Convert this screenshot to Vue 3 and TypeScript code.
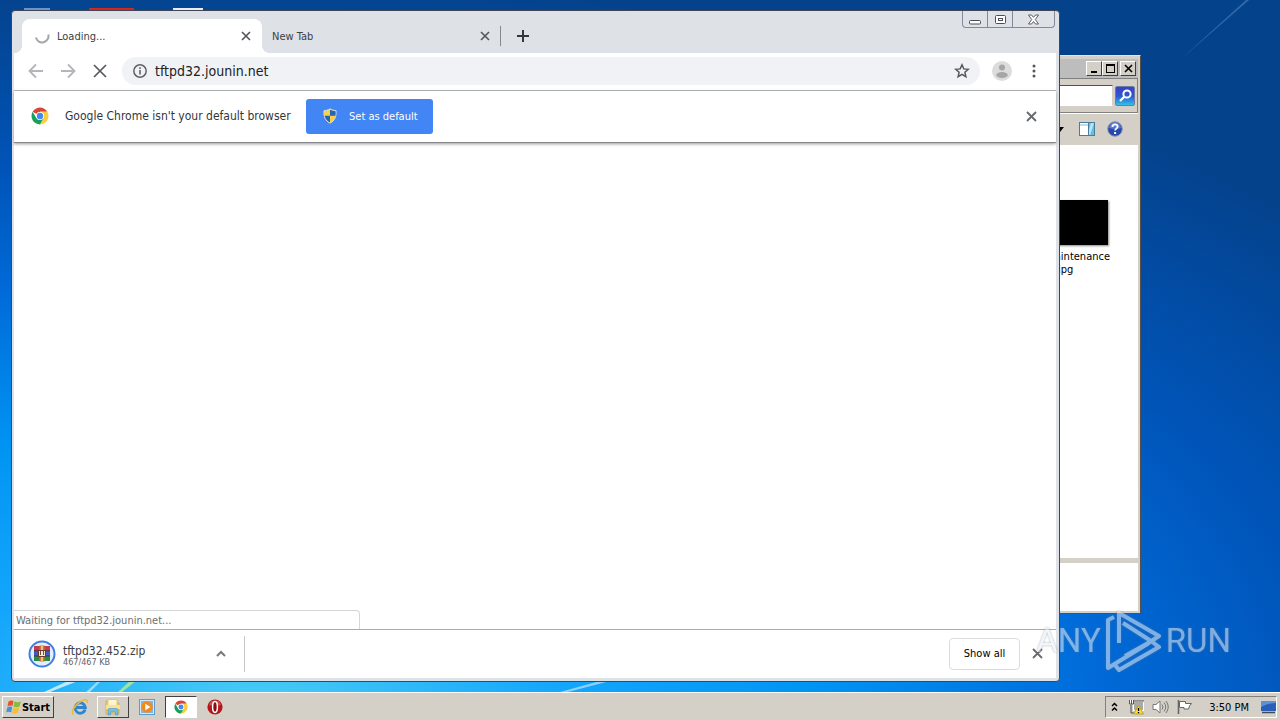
<script setup lang="ts">
import { ref } from 'vue'

interface Tab {
  title: string
  active: boolean
  loading: boolean
}

const tabs: Tab[] = [
  { title: 'Loading...', active: true, loading: true },
  { title: 'New Tab', active: false, loading: false },
]
const address = ref('tftpd32.jounin.net')
const search = ref('')
</script>

<template>
  <div class="desktop">
    <main class="stage">
      <svg class="rays" viewBox="0 0 1280 692" preserveAspectRatio="none" aria-hidden="true">
        <path d="M44 692 L68 681 L78 681 L50 692Z" fill="#fff" opacity=".7" />
        <path d="M86 692 L98 681 L101 681 L90 692Z" fill="#fff" opacity=".5" />
        <path d="M118 692 L130 681 L136 681 L122 692Z" fill="#b9f08c" opacity=".8" />
        <path d="M560 692 L600 681 L610 681 L568 692Z" fill="#fff" opacity=".5" />
        <path d="M1180 60 L1246 0 L1249 0Z" fill="#9fc6e8" opacity=".3" />
      </svg>
      <div class="shortcuts" aria-hidden="true">
        <span class="sliver pale"></span>
        <span class="sliver red"></span>
        <span class="sliver white"></span>
      </div>

      <section class="explorer">
        <header class="ex-title">
          <button class="classic" aria-label="Minimize">
            <svg width="11" height="10" viewBox="0 0 11 10"><path d="M2 7h6v2H2z" /></svg>
          </button>
          <button class="classic" aria-label="Maximize">
            <svg width="11" height="10" viewBox="0 0 11 10"><path d="M1 0h9v9H1zM2 2v6h7V2z" fill-rule="evenodd" /></svg>
          </button>
          <button class="classic gap" aria-label="Close">
            <svg width="11" height="10" viewBox="0 0 11 10"><path d="M2 1l7 7M9 1L2 8" stroke="#000" stroke-width="1.6" /></svg>
          </button>
        </header>
        <div class="ex-address">
          <input v-model="search" type="text" aria-label="Search folder" />
          <button class="go" aria-label="Search">
            <svg width="18" height="18" viewBox="0 0 18 18"><circle cx="11" cy="7" r="3.6" fill="none" stroke="#fff" stroke-width="2" /><path d="M8.4 9.6L4 14" stroke="#fff" stroke-width="2.2" /></svg>
          </button>
        </div>
        <div class="ex-tools">
          <svg class="caret" width="8" height="5" viewBox="0 0 8 5"><path d="M0 0h8L4 5z" /></svg>
          <button class="plain" aria-label="Preview pane">
            <svg width="16" height="14" viewBox="0 0 16 14"><rect x=".5" y=".5" width="15" height="13" fill="#fff" stroke="#4c7a9c" /><path d="M1 3h9" stroke="#87b4d0" /><rect x="10" y="1" width="5" height="12" fill="#65bfe0" /><path d="M12 1h3L11 13h-1V8z" fill="#b7e6f5" /><path d="M9.5 1v12" stroke="#4c7a9c" /></svg>
          </button>
          <button class="plain" aria-label="Help">
            <svg width="16" height="16" viewBox="0 0 16 16"><circle cx="8" cy="8" r="7.3" fill="#2847ad" stroke="#8e97b0" /><path d="M2 7a6 6 0 0 1 12 0Q8 9 2 7" fill="#6f91de" opacity=".7" /><path d="M5.4 6c0-3.5 5.4-3.4 5.2-.3C10.5 7.500 8.100 7.700 8.100 9.600" fill="none" stroke="#fff" stroke-width="1.8" /><rect x="7.100" y="11" width="2" height="2" fill="#fff" /></svg>
          </button>
        </div>
        <div class="ex-body">
          <figure class="file">
            <div class="thumb"></div>
            <figcaption>
              <span class="name">maintenance</span>
              <span class="ext">.jpg</span>
            </figcaption>
          </figure>
        </div>
        <div class="ex-details"></div>
      </section>

      <section class="browser">
        <header class="tabstrip">
          <div v-for="tab in tabs" :key="tab.title" class="tab" :class="{ active: tab.active }">
            <svg v-if="tab.loading" class="spinner" width="16" height="16" viewBox="0 0 16 16"><path d="M14.300 6.500A6.300 6.300 0 0 1 1.900 9.600" fill="none" stroke="#a3a6aa" stroke-width="2" /></svg>
            <span class="tab-title">{{ tab.title }}</span>
            <button class="plain tab-close" aria-label="Close tab">
              <svg width="10" height="10" viewBox="0 0 10 10"><path d="M1 1l8 8M9 1L1 9" stroke="#55585d" stroke-width="1.7" /></svg>
            </button>
          </div>
          <button class="plain new-tab" aria-label="New tab">
            <svg width="12" height="12" viewBox="0 0 12 12"><path d="M6 0v12M0 6h12" stroke="#33363b" stroke-width="2" /></svg>
          </button>
          <div class="win-controls">
            <button aria-label="Minimize">
              <svg width="13" height="13" viewBox="0 0 13 13"><rect x=".5" y="7.500" width="11" height="3.500" rx="1" fill="#fff" stroke="#4b4d5b" /></svg>
            </button>
            <button aria-label="Restore">
              <svg width="13" height="13" viewBox="0 0 13 13"><rect x="1.500" y="2.500" width="10" height="8" rx="1" fill="#fff" stroke="#4b4d5b" /><rect x="4.500" y="5.500" width="4" height="2" fill="#fff" stroke="#4b4d5b" /></svg>
            </button>
            <button class="wide" aria-label="Close">
              <svg width="13" height="13" viewBox="0 0 13 13"><path d="M1.500 2h3l2 2.300 2-2.300h3L8.300 6.500l3.200 4.500h-3l-2-2.500-2 2.500h-3l3.200-4.500z" fill="#fff" stroke="#5b5d6b" /></svg>
            </button>
          </div>
        </header>

        <nav class="toolbar">
          <button class="plain tool" aria-label="Back">
            <svg width="16" height="16" viewBox="0 0 16 16"><path d="M15 8H2M8 1.500L1.500 8 8 14.500" fill="none" stroke="#b4b6b9" stroke-width="1.900" /></svg>
          </button>
          <button class="plain tool" aria-label="Forward">
            <svg width="16" height="16" viewBox="0 0 16 16"><path d="M1 8h13M8 1.500L14.500 8 8 14.500" fill="none" stroke="#b4b6b9" stroke-width="1.900" /></svg>
          </button>
          <button class="plain tool" aria-label="Stop">
            <svg width="14" height="14" viewBox="0 0 14 14"><path d="M1 1l12 12M13 1L1 13" stroke="#55585d" stroke-width="1.700" /></svg>
          </button>
          <div class="omnibox">
            <svg width="14" height="14" viewBox="0 0 14 14"><circle cx="7" cy="7" r="6.200" fill="none" stroke="#5f6368" stroke-width="1.500" /><path d="M7 6v4.500M7 3.300v1.600" stroke="#5f6368" stroke-width="1.600" /></svg>
            <input v-model="address" type="text" aria-label="Address" />
            <button class="plain" aria-label="Bookmark this page">
              <svg width="16" height="16" viewBox="0 0 16 16"><path d="M8 1.800l1.800 4.100 4.500.4-3.400 3 1 4.400L8 11.400l-3.900 2.300 1-4.400-3.400-3 4.500-.4z" fill="none" stroke="#55585d" stroke-width="1.500" /></svg>
            </button>
          </div>
          <button class="plain tool avatar" aria-label="Profile">
            <svg width="20" height="20" viewBox="0 0 20 20"><circle cx="10" cy="10" r="10" fill="#dcdcdd" /><circle cx="10" cy="6.500" r="3" fill="#a6a6a8" /><ellipse cx="10" cy="14" rx="5.800" ry="3" fill="#a6a6a8" /></svg>
          </button>
          <button class="plain tool" aria-label="Menu">
            <svg width="4" height="14" viewBox="0 0 4 14"><circle cx="2" cy="2" r="1.500" fill="#55585d" /><circle cx="2" cy="7" r="1.500" fill="#55585d" /><circle cx="2" cy="12" r="1.500" fill="#55585d" /></svg>
          </button>
        </nav>

        <div class="infobar">
          <svg width="18" height="18" viewBox="0 0 18 18"><path d="M9 9L1.640 4.750A8.500 8.500 0 0 1 16.360 4.750L9 4.750z" fill="#dc4437" /><path d="M9 9L9 4.750H16.360A8.500 8.500 0 0 1 9 17.500L12.700 11z" fill="#fdcd40" /><path d="M9 9L12.700 11.100 9 17.500A8.500 8.500 0 0 1 1.640 4.750L5.300 11z" fill="#1a9e5c" /><circle cx="9" cy="9" r="4.100" fill="#fff" /><circle cx="9" cy="9" r="3.200" fill="#4587f3" /></svg>
          <span class="info-text">Google Chrome isn't your default browser</span>
          <button class="set-default">
            <svg width="14" height="16" viewBox="0 0 14 16"><path d="M7 .8C5 2.200 3 2.500 1 2.500c-.5 6 1.200 10.300 6 12.700 4.800-2.400 6.500-6.700 6-12.700C11 2.500 9 2.200 7 .8z" fill="#f7d04a" stroke="#d7dbe0" /><path d="M7 1.800v6H1.600C1.300 6.200 1.300 5 1.400 3.300 3.500 3.200 5.500 2.700 7 1.800z" fill="#f4d44c" /><path d="M7 1.800v6h5.400c.3-1.600.3-2.800.2-4.500C10.500 3.200 8.500 2.700 7 1.800z" fill="#2763b5" /><path d="M7 14.500V7.800H1.600C2.300 10.800 4 13 7 14.500z" fill="#2763b5" /></svg>
            <span>Set as default</span>
          </button>
          <button class="plain info-close" aria-label="Dismiss">
            <svg width="11" height="11" viewBox="0 0 11 11"><path d="M1 1l9 9M10 1L1 10" stroke="#66696d" stroke-width="1.800" /></svg>
          </button>
        </div>

        <div class="page">
          <div class="status">Waiting for tftpd32.jounin.net...</div>
        </div>

        <footer class="shelf">
          <button class="plain download">
            <svg width="28" height="28" viewBox="0 0 28 28"><circle cx="14" cy="14" r="12.500" fill="#e3eefc" stroke="#3f7de0" stroke-width="2" /><rect x="6" y="6" width="16" height="5" fill="#c53a4c" /><rect x="6" y="11" width="16" height="5" fill="#4558c8" /><rect x="6" y="16" width="16" height="5" fill="#2c8a45" /><path d="M6 10.800h16M6 16h16" stroke="#27304a" stroke-width=".8" /><rect x="11.500" y="5.500" width="5" height="16" fill="#c9773c" /><path d="M14 6v4M14 17v4" stroke="#f6dc8a" stroke-width="1.500" /><rect x="10.500" y="10.500" width="7" height="6" fill="#f4ead0" stroke="#6a3a2a" /><path d="M12.500 11v4M15.500 11v4" stroke="#704b35" /></svg>
            <span class="dl-text">
              <span class="dl-name">tftpd32.452.zip</span>
              <span class="dl-size">467/467 KB</span>
            </span>
          </button>
          <button class="plain dl-menu" aria-label="Download options">
            <svg width="10" height="7" viewBox="0 0 10 7"><path d="M1 6l4-4 4 4" fill="none" stroke="#77797c" stroke-width="2" /></svg>
          </button>
          <button class="show-all">Show all</button>
          <button class="plain shelf-close" aria-label="Close downloads bar">
            <svg width="11" height="11" viewBox="0 0 11 11"><path d="M1 1l9 9M10 1L1 10" stroke="#66696d" stroke-width="1.800" /></svg>
          </button>
        </footer>
      </section>

      <div class="watermark">
        <span>ANY</span>
        <svg width="57" height="62" viewBox="0 0 57 62"><path d="M9 7L3 10V58L44 33" fill="none" stroke="#e5effa" stroke-width="4" stroke-linejoin="round" /><path d="M10 55L14 60L54 37L46 31L18 13M14 33V3L54 26L45 32L20 46" fill="none" stroke="#e5effa" stroke-width="4" stroke-linejoin="round" /></svg>
        <span>RUN</span>
      </div>
    </main>

    <footer class="taskbar">
      <button class="start">
        <svg width="16" height="16" viewBox="0 0 16 16"><path d="M2.500 2.500Q5 .8 7.500 2L6.500 7Q4 6 1.500 7.500z" fill="#e5532b" /><path d="M8.500 2.500Q11.500 4 15 2.500L13.500 7.500Q10.500 9 7.500 7.500z" fill="#84bd3c" /><path d="M1.200 8.500Q4 7 6.200 8L5.200 13.500Q2.500 12 .2 13.500z" fill="#4193dc" /><path d="M7.200 8.500Q10 10 13.200 8.500L12 13.500Q9 15.500 6.200 14z" fill="#f7be38" /></svg>
        <span>Start</span>
      </button>
      <div class="quick">
        <button class="plain" aria-label="Internet Explorer">
          <svg width="18" height="18" viewBox="0 0 18 18"><path d="M14.200 11.500A5.200 5.200 0 1 1 14.400 9.500H5" fill="none" stroke="#2e86cf" stroke-width="2.800" /><path d="M2.500 16.500C-.5 15 3 7.500 9.500 3.500 13 1.300 17.500 .5 16.300 5" fill="none" stroke="#e9b93c" stroke-width="1.500" /></svg>
        </button>
        <button class="raised" aria-label="Windows Explorer">
          <svg width="18" height="18" viewBox="0 0 18 18"><path d="M2 3h5l1 2h7v11H2z" fill="#eecf6c" stroke="#c9a648" stroke-width=".7" /><path d="M4 1.500h9v6H4z" fill="#fff5cc" stroke="#d7bb68" stroke-width=".7" /><path d="M2 7h14v4H2z" fill="#f8e298" /><path d="M4 17v-5q0-1.500 1.500-1.500h7q1.500 0 1.500 1.500v5h-2.500v-3h-5v3z" fill="#78bde4" stroke="#4d95c4" stroke-width=".6" /></svg>
        </button>
        <button class="plain" aria-label="Media Player">
          <svg width="16" height="16" viewBox="0 0 16 16"><rect x=".5" y=".5" width="15" height="15" fill="#d4e9f8" stroke="#5f9ccb" /><rect x="2" y="2" width="12" height="12" fill="#7cb9e4" /><circle cx="8" cy="8" r="5.800" fill="#f08a1f" /><path d="M6.300 4.800L11.500 8l-5.200 3.200z" fill="#fff" /></svg>
        </button>
        <button class="pressed" aria-label="Google Chrome">
          <svg width="14" height="14" viewBox="0 0 18 18"><path d="M9 9L1.640 4.750A8.500 8.500 0 0 1 16.360 4.750L9 4.750z" fill="#dc4437" /><path d="M9 9L9 4.750H16.360A8.500 8.500 0 0 1 9 17.500L12.700 11z" fill="#fdcd40" /><path d="M9 9L12.700 11.100 9 17.500A8.500 8.500 0 0 1 1.640 4.750L5.300 11z" fill="#1a9e5c" /><circle cx="9" cy="9" r="4.100" fill="#fff" /><circle cx="9" cy="9" r="3.200" fill="#4587f3" /></svg>
        </button>
        <button class="plain" aria-label="Opera">
          <svg width="16" height="16" viewBox="0 0 16 16"><circle cx="8" cy="8" r="7.600" fill="#b3161b" /><path d="M2 6a6.300 6.300 0 0 1 12 0Q8 8 2 6" fill="#df6a66" opacity=".7" /><ellipse cx="8" cy="8" rx="2.400" ry="5.400" fill="#8a0c10" stroke="#fff" stroke-width="1.500" /></svg>
        </button>
      </div>
      <div class="tray">
        <button class="plain" aria-label="Show hidden icons">
          <svg width="7" height="10" viewBox="0 0 7 10"><path d="M1 4l2.500-2.500L6 4M1 8.500L3.500 6 6 8.500" fill="none" stroke="#000" stroke-width="1.500" /></svg>
        </button>
        <svg width="16" height="16" viewBox="0 0 16 16"><rect x="5.500" y="2.500" width="10" height="9" fill="#a9aaa8" stroke="#fff" /><path d="M5 2h11M3 6v8h4" fill="none" stroke="#4d4d4d" /><path d="M1.500 1v4h4V1M3.500 1v4" fill="#fff" stroke="#555" /><path d="M10.500 6.500L15.500 15h-10z" fill="#fbdc27" stroke="#b99a12" stroke-width=".8" /><path d="M10.500 9v3M10.500 13v1.200" stroke="#000" stroke-width="1.300" /></svg>
        <svg width="17" height="16" viewBox="0 0 17 16"><path d="M1 5.500h3L8 2v12l-4-3.500H1z" fill="#fff" stroke="#777" /><path d="M10 5.500q2 2.500 0 5M12 3.500q3.500 4.500 0 9M14 2q4.500 6 0 12" fill="none" stroke="#777" /></svg>
        <svg width="16" height="16" viewBox="0 0 16 16"><path d="M1.500 1v14" stroke="#666" stroke-width="1.600" /><path d="M2.500 2.500h6v2h6L12.500 7l-1 3H7V8.500H2.500z" fill="#fff" stroke="#666" /></svg>
        <time class="clock">3:50 PM</time>
        <svg width="15" height="14" viewBox="0 0 15 14"><rect y="1" width="15" height="10" fill="#2b5eb8" /><path d="M0 1h15v2Q7 3 0 7z" fill="#5c92da" /><path d="M1 12.500h13" stroke="#414a58" stroke-width="1.500" /></svg>
      </div>
    </footer>
  </div>
</template>

<style>
html,
body {
  margin: 0;
}
</style>

<style scoped>
* {
  box-sizing: border-box;
}
.desktop {
  display: flex;
  flex-direction: column;
  height: 100vh;
  overflow: hidden;
  font-family: 'DejaVu Sans Condensed', 'DejaVu Sans', sans-serif;
  font-size: 11px;
  color: #000;
}
button,
input {
  font: inherit;
  color: inherit;
  padding: 0;
  margin: 0;
}
svg {
  display: block;
  flex: none;
}
.plain {
  display: flex;
  align-items: center;
  justify-content: center;
  border: 0;
  background: none;
}
.stage {
  position: relative;
  flex: 1;
  min-height: 0;
  overflow: hidden;
  background: radial-gradient(ellipse 110% 105% at 20% 102%, #4accf4 0, #14a6fc 22%, #0094f2 40%, #006ad8 60%, #0054b8 76%, #04428c 100%);
}
.rays {
  position: absolute;
  inset: 0;
  width: 100%;
  height: 100%;
}
.shortcuts {
  display: flex;
  gap: 39px;
  padding: 8px 0 0 24px;
}
.sliver {
  height: 3px;
}
.pale {
  width: 26px;
  background: #6d93c8;
}
.red {
  width: 45px;
  background: #d3261c;
}
.white {
  width: 30px;
  background: #e9edf3;
}

.explorer {
  position: absolute;
  top: 55px;
  right: 139px;
  bottom: 78px;
  left: 50%;
  display: flex;
  flex-direction: column;
  padding: 3px 2px 2px;
  background: #d4d0c8;
  border: 1px solid #e8e5df;
  border-right-color: #55504a;
  border-bottom-color: #55504a;
}
.ex-title {
  display: flex;
  justify-content: flex-end;
  align-items: center;
  height: 19px;
  padding-right: 2px;
  background: #bdbdbd;
}
.classic {
  display: flex;
  align-items: center;
  justify-content: center;
  width: 16px;
  height: 15px;
  background: #d4d0c8;
  border: 1px solid #fff;
  border-right-color: #404040;
  border-bottom-color: #404040;
}
.classic.gap {
  margin-left: 2px;
}
.ex-address {
  display: flex;
  align-items: center;
  gap: 2px;
  height: 35px;
  padding-right: 2px;
  border: 1px solid #808080;
  box-shadow: 0 1px 0 #fff;
}
.ex-address input {
  flex: 1;
  min-width: 0;
  height: 21px;
  border: 1px solid #55504a;
  border-right-color: #d4d0c8;
  border-bottom-color: #fff;
  background: #fff;
}
.go {
  display: flex;
  align-items: center;
  justify-content: center;
  width: 20px;
  height: 20px;
  border: 1px solid #6b7ba5;
  border-radius: 2px;
  background: linear-gradient(#3a3fc4, #2b58cf 50%, #33bfe9);
}
.ex-tools {
  display: flex;
  align-items: center;
  justify-content: flex-end;
  gap: 12px;
  height: 32px;
  padding-right: 15px;
}
.caret {
  margin-right: 3px;
}
.ex-body {
  display: flex;
  justify-content: flex-end;
  flex: 1;
  padding: 55px 28px 0 0;
  background: #fff;
}
.file {
  width: 92px;
  margin: 0;
  line-height: 13px;
}
.thumb {
  height: 45px;
  margin: 0 2px 5px;
  background: #000;
  box-shadow: 1px 1px 2px #888;
}
.file figcaption {
  display: flex;
  flex-direction: column;
}
.name {
  align-self: flex-end;
}
.ext {
  align-self: center;
}
.ex-details {
  height: 53px;
  background: #fff;
  border-top: 5px solid #d4d0c8;
}

.browser {
  position: absolute;
  top: 10px;
  right: 220px;
  bottom: 10px;
  left: 11px;
  display: flex;
  flex-direction: column;
  padding: 0 3px 3px 2px;
  background: #dee1e6;
  border: 1px solid #3f4757;
  border-radius: 4px;
  overflow: hidden;
}
.tabstrip {
  display: flex;
  height: 42px;
  padding-left: 8px;
  color: #3c4043;
}
.tab {
  position: relative;
  display: flex;
  align-items: center;
  width: 239px;
  height: 34px;
  margin-top: 8px;
  padding: 0 10px;
}
.tab:not(.active)::after {
  content: '';
  width: 1px;
  height: 20px;
  margin: 0 -10px 0 10px;
  background: #85888c;
}
.tab.active {
  width: 240px;
  padding-left: 12px;
  padding-right: 11px;
  background: #fff;
  border-radius: 8px 8px 0 0;
}
.tab.active::before,
.tab.active::after {
  content: '';
  position: absolute;
  bottom: 0;
  width: 8px;
  height: 8px;
}
.tab.active::before {
  left: -8px;
  background: radial-gradient(circle at 0 0, transparent 8px, #fff 8px);
}
.tab.active::after {
  right: -8px;
  background: radial-gradient(circle at 100% 0, transparent 8px, #fff 8px);
}
.spinner {
  margin-right: 7px;
}
.tab-title {
  flex: 1;
}
.new-tab {
  width: 28px;
  height: 34px;
  margin-top: 8px;
  margin-left: 8px;
}
.win-controls {
  display: flex;
  align-self: flex-start;
  margin-left: auto;
  margin-right: 1px;
  height: 17px;
  border: 1px solid #85889a;
  border-top: 0;
  border-radius: 0 0 4px 4px;
}
.win-controls button {
  display: flex;
  align-items: center;
  justify-content: center;
  width: 25px;
  border: 0;
  border-right: 1px solid #85889a;
  background: none;
}
.win-controls .wide {
  width: 41px;
  border-right: 0;
}
.toolbar {
  display: flex;
  align-items: center;
  height: 38px;
  padding: 0 6px 1px;
  background: #fff;
  border-bottom: 1px solid #b1b3b5;
}
.tool {
  width: 32px;
  height: 28px;
}
.omnibox {
  display: flex;
  flex: 1;
  align-items: center;
  gap: 8px;
  height: 28px;
  margin: 0 6px;
  padding: 0 10px 0 11px;
  border-radius: 14px;
  background: #f0f2f5;
}
.omnibox input {
  flex: 1;
  min-width: 0;
  border: 0;
  background: none;
  font-size: 14px;
  color: #202124;
}
.infobar {
  position: relative;
  display: flex;
  align-items: center;
  height: 52px;
  padding: 0 19px 1px 17px;
  background: #fff;
  border-bottom: 1px solid #85878a;
  box-shadow: 0 1px 3px #999;
}
.info-text {
  margin: 0 12px 0 16px;
  width: 229px;
  white-space: nowrap;
  font-size: 12px;
  color: #33363a;
}
.set-default {
  display: flex;
  align-items: center;
  gap: 12px;
  height: 35px;
  padding: 0 15px 0 17px;
  border: 0;
  border-radius: 3px;
  background: #4285f4;
  color: #fff;
}
.info-close {
  margin-left: auto;
}
.page {
  display: flex;
  flex: 1;
  align-items: flex-end;
  min-height: 0;
  background: #fff;
}
.status {
  width: 346px;
  height: 19px;
  padding-left: 2px;
  line-height: 19px;
  border: 1px solid #d5d6d8;
  border-width: 1px 1px 0 0;
  border-radius: 0 4px 0 0;
  color: #6b6e73;
}
.shelf {
  display: flex;
  align-items: center;
  height: 49px;
  padding: 0 13px 1px 14px;
  background: #fff;
  border-top: 1px solid #a9abad;
}
.download {
  gap: 7px;
  width: 169px;
  justify-content: flex-start;
  text-align: left;
}
.dl-text {
  display: flex;
  flex-direction: column;
  padding-top: 4px;
}
.dl-name {
  font-size: 12px;
  line-height: 13px;
  color: #3c4043;
}
.dl-size {
  font-size: 9px;
  line-height: 9px;
  color: #5f6368;
}
.dl-menu {
  width: 48px;
  height: 36px;
  border-right: 1px solid #c5c7c9;
}
.show-all {
  width: 71px;
  height: 32px;
  margin-left: auto;
  margin-right: 12px;
  border: 1px solid #dadce0;
  border-radius: 4px;
  background: #fff;
}
.watermark {
  position: absolute;
  right: 49px;
  bottom: 20px;
  display: flex;
  align-items: center;
  gap: 4px;
  font-family: Roboto, sans-serif;
  font-size: 33px;
  line-height: 62px;
  color: #e5effa;
  opacity: 0.55;
  filter: drop-shadow(0 0 1px #777);
  pointer-events: none;
}

.taskbar {
  display: flex;
  align-items: center;
  height: 28px;
  padding: 1px 3px 0 2px;
  background: #d4d0c8;
  border-top: 1px solid #fff;
}
.start,
.raised,
.pressed {
  display: flex;
  align-items: center;
  justify-content: center;
  height: 22px;
  border: 1px solid #fff;
  border-right-color: #404040;
  border-bottom-color: #404040;
  background: #d4d0c8;
}
.start {
  width: 52px;
  font-weight: bold;
}
.quick {
  display: flex;
  align-items: center;
  margin-left: 17px;
}
.quick .plain {
  width: 36px;
  height: 22px;
}
.quick .plain:first-child {
  width: 26px;
  margin-left: -4px;
  margin-right: 4px;
}
.raised,
.pressed {
  width: 32px;
}
.pressed {
  background: #fff;
  border-color: #404040 #fff #fff #404040;
}
.tray {
  display: flex;
  align-items: center;
  gap: 8px;
  height: 22px;
  margin-left: auto;
  padding: 0 0 0 5px;
  border: 1px solid #808080;
  border-right-color: #fff;
  border-bottom-color: #fff;
}
.tray .plain {
  margin-right: 2px;
}
.clock {
  margin-left: 8px;
  margin-right: 4px;
}
</style>
